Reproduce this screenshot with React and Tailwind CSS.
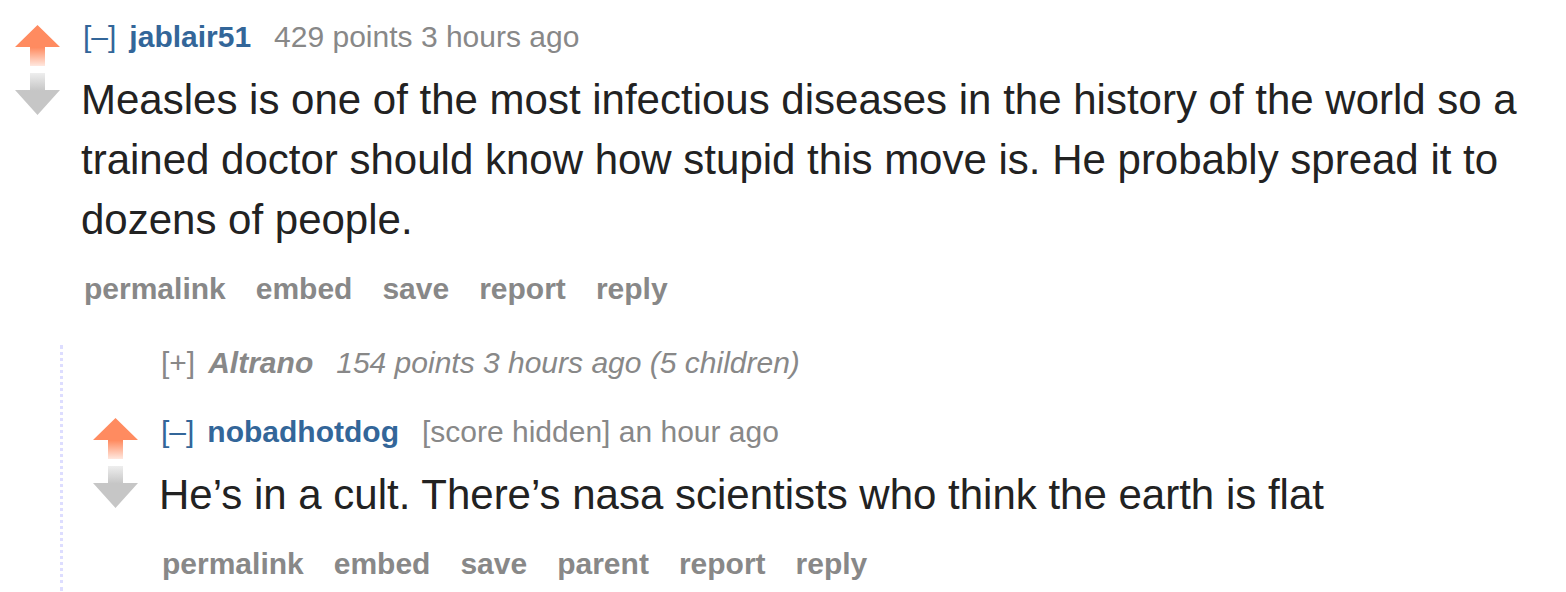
import React from "react";

const UpArrow = () => (
  <svg width="45" height="41" viewBox="0 0 45 41">
    <defs>
      <linearGradient id="upg" x1="0" y1="0" x2="0" y2="1">
        <stop offset="0" stopColor="#ff8b60" />
        <stop offset="0.55" stopColor="#ff8b60" />
        <stop offset="1" stopColor="#ff8b60" stopOpacity="0.2" />
      </linearGradient>
    </defs>
    <path d="M22.5 0 L45 22 L30 22 L30 41 L15 41 L15 22 L0 22 Z" fill="url(#upg)" />
  </svg>
);

const DownArrow = () => (
  <svg width="45" height="42" viewBox="0 0 45 42">
    <defs>
      <linearGradient id="downg" x1="0" y1="0" x2="0" y2="1">
        <stop offset="0" stopColor="#c6c6c6" stopOpacity="0.3" />
        <stop offset="0.42" stopColor="#c6c6c6" />
        <stop offset="1" stopColor="#c6c6c6" />
      </linearGradient>
    </defs>
    <path d="M15 0 L30 0 L30 17 L45 17 L22.5 42 L0 17 L15 17 Z" fill="url(#downg)" />
  </svg>
);

const Votes = ({ top }) => (
  <div className={`flex flex-col gap-[7px] w-[45px] shrink-0 ${top}`}>
    <UpArrow />
    <DownArrow />
  </div>
);

const Buttons = ({ items }) => (
  <ul className="flex gap-[30px] pl-[3px] mt-[21px] text-[30px] leading-[36px] font-bold text-[#888]">
    {items.map((item) => (
      <li key={item}>{item}</li>
    ))}
  </ul>
);

const Comment = ({ author, meta, body, buttons, arrowTop }) => {
  return (
    <div className="flex gap-[21px]">
      <Votes top={arrowTop} />
      <div className="flex-1 min-w-0">
        <p className="pl-[2px] text-[30px] leading-[36px] text-[#888] whitespace-nowrap">
          <span className="text-[#369]">[–]</span>
          <span className="ml-[13px] font-bold text-[#369]">{author}</span>
          <span className="ml-[23px]">{meta}</span>
        </p>
        <div className="mt-[15px] text-[42px] leading-[60px] text-[#222]">
          {body}
        </div>
        <Buttons items={buttons} />
      </div>
    </div>
  );
};

export default function App() {
  return (
    <div
      className="bg-white h-[592px] w-[1566px] overflow-hidden pt-[19px] pl-[15px]"
      style={{ fontFamily: '"Liberation Sans", Arial, sans-serif' }}
    >
      <Comment
        author="jablair51"
        meta="429 points 3 hours ago"
        arrowTop="mt-[6px]"
        body="Measles is one of the most infectious diseases in the history of the world so a trained doctor should know how stupid this move is. He probably spread it to dozens of people."
        buttons={["permalink", "embed", "save", "report", "reply"]}
      />

      <div className="ml-[45px] mt-[38px] border-l-[3px] border-dotted border-[#ddf] pl-[30px] pb-[9px]">
        <div className="flex gap-[21px]">
          <div className="w-[45px] shrink-0" />
          <p className="pl-[2px] text-[30px] leading-[36px] text-[#888] italic whitespace-nowrap">
            <span className="not-italic">[+]</span>
            <span className="ml-[13px] font-bold">Altrano</span>
            <span className="ml-[23px]">154 points 3 hours ago (5 children)</span>
          </p>
        </div>

        <div className="mt-[33px]">
          <Comment
            author="nobadhotdog"
            meta="[score hidden] an hour ago"
            arrowTop="mt-[4px]"
            body="He’s in a cult. There’s nasa scientists who think the earth is flat"
            buttons={["permalink", "embed", "save", "parent", "report", "reply"]}
          />
        </div>
      </div>
    </div>
  );
}
